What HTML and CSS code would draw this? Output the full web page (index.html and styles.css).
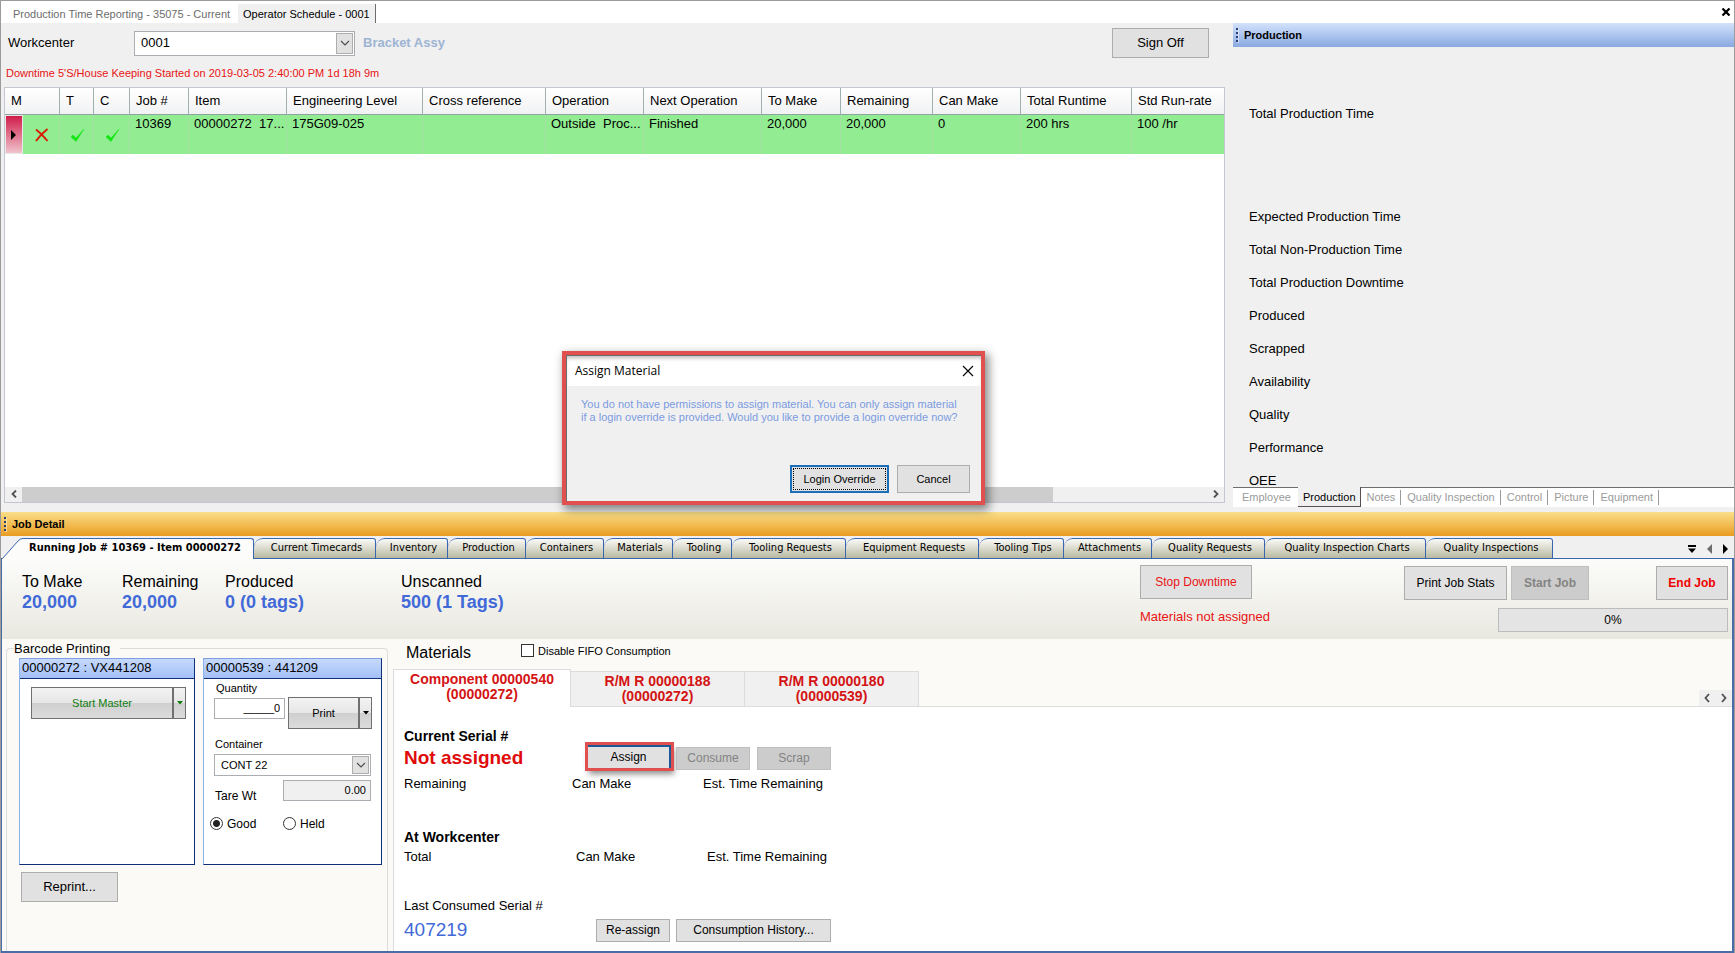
FILE: index.html
```html
<!DOCTYPE html>
<html lang="en">
<head>
<meta charset="utf-8">
<title>Operator Schedule - 0001</title>
<link rel="stylesheet" href="styles.css">
</head>
<body>
<div class="app">
  <nav class="doc-tabs" aria-label="Documents">
    <button class="doc-tab" type="button">Production Time Reporting - 35075 - Current</button>
    <button class="doc-tab doc-tab-active" type="button">Operator Schedule - 0001</button>
    <button class="doc-close" type="button" aria-label="Close"><svg width="10" height="8" viewBox="0 0 10 8"><path d="M1.500 .5l7 7M8.500 .5l-7 7" stroke="#000" stroke-width="2.200" fill="none"/></svg></button>
  </nav>

  <div class="upper">
    <main class="schedule">
      <div class="toolbar">
        <label class="toolbar-label" for="workcenter">Workcenter</label>
        <div class="combo combo-workcenter">
          <select id="workcenter"><option>0001</option></select>
          <span class="combo-arrow"><svg width="10" height="6" viewBox="0 0 10 6"><path d="M1 1l4 4 4-4" fill="none" stroke="#505050" stroke-width="1.200"/></svg></span>
        </div>
        <span class="workcenter-name">Bracket Assy</span>
        <button class="btn btn-signoff" type="button">Sign Off</button>
      </div>
      <p class="downtime">Downtime 5'S/House Keeping Started on 2019-03-05 2:40:00 PM 1d 18h 9m</p>
      <div class="grid-box">
        <table class="jobs">
          <colgroup>
            <col class="w18"><col class="w37"><col class="w34"><col class="w36"><col class="w59"><col class="w98"><col class="w136"><col class="w123"><col class="w98"><col class="w118"><col class="w79"><col class="w92"><col class="w88"><col class="w111"><col class="w92">
          </colgroup>
          <thead>
            <tr><th colspan="2">M</th><th>T</th><th>C</th><th>Job #</th><th>Item</th><th>Engineering Level</th><th>Cross reference</th><th>Operation</th><th>Next Operation</th><th>To Make</th><th>Remaining</th><th>Can Make</th><th>Total Runtime</th><th>Std Run-rate</th></tr>
          </thead>
          <tbody>
            <tr>
              <td class="row-head"><svg width="5" height="10" viewBox="0 0 5 10"><path d="M0 0l5 5-5 5z" fill="#000"/></svg></td>
              <td class="mark"><svg width="14" height="14" viewBox="0 0 14 14"><path d="M1 1.500Q7 6 12.500 13M12.500 1Q6 6 1 13" fill="none" stroke="#d81e05" stroke-width="2"/></svg></td>
              <td class="mark"><svg width="14" height="14" viewBox="0 0 14 14"><path d="M0 9l2-2 3 3 8-9-8 12.500z" fill="#14e614" stroke="#14e614" stroke-width=".5"/></svg></td>
              <td class="mark"><svg width="14" height="14" viewBox="0 0 14 14"><path d="M0 9l2-2 3 3 8-9-8 12.500z" fill="#14e614" stroke="#14e614" stroke-width=".5"/></svg></td>
              <td>10369</td><td>00000272&nbsp; 17...</td><td>175G09-025</td><td></td><td>Outside&nbsp; Proc...</td><td>Finished</td><td>20,000</td><td>20,000</td><td>0</td><td>200 hrs</td><td>100 /hr</td>
            </tr>
          </tbody>
        </table>
        <div class="scrollbar">
          <button class="scroll-btn" type="button" aria-label="Scroll left"><svg width="6" height="8" viewBox="0 0 6 8"><path d="M5 .5L1.500 4 5 7.500" fill="none" stroke="#505050" stroke-width="1.800"/></svg></button>
          <div class="scroll-track"><div class="scroll-thumb"></div></div>
          <button class="scroll-btn" type="button" aria-label="Scroll right"><svg width="6" height="8" viewBox="0 0 6 8"><path d="M1 .5L4.500 4 1 7.500" fill="none" stroke="#505050" stroke-width="1.800"/></svg></button>
        </div>
      </div>
    </main>

    <aside class="production">
      <h2 class="pane-title pane-title-blue"><span class="grip"></span>Production</h2>
      <ul class="metrics">
        <li class="metric-lead">Total Production Time</li>
        <li>Expected Production Time</li>
        <li>Total Non-Production Time</li>
        <li>Total Production Downtime</li>
        <li>Produced</li>
        <li>Scrapped</li>
        <li>Availability</li>
        <li>Quality</li>
        <li>Performance</li>
        <li>OEE</li>
      </ul>
      <nav class="side-tabs" aria-label="Production panes">
        <button class="side-tab side-tab-first" type="button">Employee</button>
        <button class="side-tab side-tab-active" type="button">Production</button>
        <button class="side-tab" type="button">Notes</button>
        <button class="side-tab" type="button">Quality Inspection</button>
        <button class="side-tab" type="button">Control</button>
        <button class="side-tab" type="button">Picture</button>
        <button class="side-tab" type="button">Equipment</button>
      </nav>
    </aside>
  </div>

  <section class="detail">
    <h2 class="pane-title pane-title-gold"><span class="grip"></span>Job Detail</h2>
    <nav class="job-tabs" aria-label="Job detail">
      <button class="job-tab-active" type="button"><svg width="24" height="21" viewBox="0 0 24 21"><path d="M0 20.500h1.500L17 3q2-2.500 5-2.500h2V21H0z" fill="#fcfcfb"/><path d="M0 20.500h1.500L17 3q2-2.500 5-2.500h2" fill="none" stroke="#3a66b0"/></svg><span>Running Job # 10369 - Item 00000272</span></button>
      <button class="job-tab" type="button">Current Timecards</button>
      <button class="job-tab" type="button">Inventory</button>
      <button class="job-tab" type="button">Production</button>
      <button class="job-tab" type="button">Containers</button>
      <button class="job-tab" type="button">Materials</button>
      <button class="job-tab" type="button">Tooling</button>
      <button class="job-tab" type="button">Tooling Requests</button>
      <button class="job-tab" type="button">Equipment Requests</button>
      <button class="job-tab" type="button">Tooling Tips</button>
      <button class="job-tab" type="button">Attachments</button>
      <button class="job-tab" type="button">Quality Requests</button>
      <button class="job-tab" type="button">Quality Inspection Charts</button>
      <button class="job-tab" type="button">Quality Inspections</button>
      <span class="job-nav">
        <button class="icon-btn" type="button" aria-label="Tab list"><svg width="8" height="8" viewBox="0 0 8 8"><path d="M0 0h8v2H0zM0 3.500h8L4 8z"/></svg></button>
        <button class="icon-btn" type="button" aria-label="Previous tab"><svg width="5" height="10" viewBox="0 0 5 10"><path d="M5 0v10L0 5z" fill="#6d6d6d"/></svg></button>
        <button class="icon-btn" type="button" aria-label="Next tab"><svg width="5" height="10" viewBox="0 0 5 10"><path d="M0 0v10l5-5z"/></svg></button>
      </span>
    </nav>

    <div class="job-panel">
      <div class="summary">
        <dl class="totals">
          <div><dt>To Make</dt><dd>20,000</dd></div>
          <div><dt>Remaining</dt><dd>20,000</dd></div>
          <div><dt>Produced</dt><dd>0 (0 tags)</dd></div>
          <div><dt>Unscanned</dt><dd>500 (1 Tags)</dd></div>
        </dl>
        <div class="downtime-actions">
          <button class="btn btn-stop" type="button">Stop Downtime</button>
          <span class="warning">Materials not assigned</span>
        </div>
        <div class="job-actions">
          <div class="job-buttons">
            <button class="btn btn-stats" type="button">Print Job Stats</button>
            <button class="btn btn-start" type="button" disabled>Start Job</button>
            <button class="btn btn-end" type="button">End Job</button>
          </div>
          <div class="progress" role="progressbar" aria-valuenow="0" aria-valuemin="0" aria-valuemax="100">0%</div>
        </div>
      </div>

      <div class="job-body">
        <fieldset class="barcode">
          <legend>Barcode Printing</legend>
          <div class="cards">
            <section class="card card-master">
              <h3>00000272 : VX441208</h3>
              <div class="split split-master">
                <button class="split-main" type="button">Start Master</button><button class="split-drop" type="button" aria-label="Start Master options"><svg width="6" height="4" viewBox="0 0 6 4"><path d="M0 0h6L3 3.500z" fill="#107c10"/></svg></button>
              </div>
            </section>
            <section class="card card-print">
              <h3>00000539 : 441209</h3>
              <div class="print-form">
                <div class="qty-row">
                  <div class="qty">
                    <label for="qty">Quantity</label>
                    <input id="qty" class="field" type="text" value="_____0">
                  </div>
                  <div class="split split-print">
                    <button class="split-main" type="button">Print</button><button class="split-drop" type="button" aria-label="Print options"><svg width="6" height="4" viewBox="0 0 6 4"><path d="M0 0h6L3 3.500z"/></svg></button>
                  </div>
                </div>
                <label class="container-label" for="container">Container</label>
                <div class="combo combo-container">
                  <select id="container"><option>CONT 22</option></select>
                  <span class="combo-arrow"><svg width="10" height="6" viewBox="0 0 10 6"><path d="M1 1l4 4 4-4" fill="none" stroke="#505050" stroke-width="1.200"/></svg></span>
                </div>
                <div class="tare">
                  <label for="tare">Tare Wt</label>
                  <input id="tare" class="field field-readonly" type="text" value="0.00" readonly>
                </div>
                <div class="radios">
                  <label><input type="radio" name="state" checked>Good</label>
                  <label><input type="radio" name="state">Held</label>
                </div>
              </div>
            </section>
          </div>
          <button class="btn btn-reprint" type="button">Reprint...</button>
        </fieldset>

        <section class="materials">
          <div class="materials-head">
            <h3>Materials</h3>
            <label><input class="check" type="checkbox">Disable FIFO Consumption</label>
          </div>
          <div class="mat-tabs">
            <button class="mat-tab mat-tab-active" type="button">Component 00000540<br>(00000272)</button>
            <button class="mat-tab" type="button">R/M R 00000188<br>(00000272)</button>
            <button class="mat-tab" type="button">R/M R 00000180<br>(00000539)</button>
            <span class="mat-nav">
              <button class="icon-btn" type="button" aria-label="Previous material"><svg width="6" height="10" viewBox="0 0 6 10"><path d="M5 1L1.500 5 5 9" fill="none" stroke="#505050" stroke-width="1.800"/></svg></button>
              <button class="icon-btn" type="button" aria-label="Next material"><svg width="6" height="10" viewBox="0 0 6 10"><path d="M1 1l3.500 4L1 9" fill="none" stroke="#505050" stroke-width="1.800"/></svg></button>
            </span>
          </div>
          <div class="mat-panel">
            <div class="serial">
              <div>
                <h4>Current Serial #</h4>
                <p class="unassigned">Not assigned</p>
              </div>
              <div class="serial-actions">
                <button class="btn btn-assign" type="button">Assign</button>
                <button class="btn btn-small" type="button" disabled>Consume</button>
                <button class="btn btn-small" type="button" disabled>Scrap</button>
              </div>
            </div>
            <div class="facts facts-serial"><span>Remaining</span><span>Can Make</span><span>Est. Time Remaining</span></div>
            <h4>At Workcenter</h4>
            <div class="facts facts-center"><span>Total</span><span>Can Make</span><span>Est. Time Remaining</span></div>
            <div class="last">
              <div>
                <p>Last Consumed Serial #</p>
                <p class="last-serial">407219</p>
              </div>
              <div class="last-actions">
                <button class="btn btn-small" type="button">Re-assign</button>
                <button class="btn btn-history" type="button">Consumption History...</button>
              </div>
            </div>
          </div>
        </section>
      </div>
    </div>
  </section>

  <section class="dialog" role="dialog" aria-labelledby="dialog-title">
    <header class="dialog-title">
      <h2 id="dialog-title">Assign Material</h2>
      <button class="icon-btn" type="button" aria-label="Close dialog"><svg width="12" height="12" viewBox="0 0 12 12"><path d="M1 1l10 10M11 1L1 11" stroke="#000" stroke-width="1.100" fill="none"/></svg></button>
    </header>
    <div class="dialog-body">
      <p>You do not have permissions to assign material. You can only assign material<br>if a login override is provided. Would you like to provide a login override now?</p>
      <div class="dialog-actions">
        <button class="btn btn-override" type="button"><span>Login Override</span></button>
        <button class="btn btn-cancel" type="button">Cancel</button>
      </div>
    </div>
  </section>
</div>
</body>
</html>
```
FILE: styles.css
```css
* { box-sizing: border-box; }

body {
  margin: 0;
  font: 13px/20px "Liberation Sans", Arial, sans-serif;
  color: #000;
  background: #f0f0f0;
}

h2, h3, h4, p, ul, dl, dd { margin: 0; padding: 0; font-size: 13px; font-weight: normal; }
ul { list-style: none; }
button, input, select { font: inherit; color: inherit; margin: 0; border-radius: 0; }
button { padding: 0; border: 0; background: none; white-space: nowrap; }
svg { display: block; }

.app {
  position: relative;
  display: grid;
  grid-template-rows: 22px minmax(488px, 488fr) minmax(441px, 441fr);
  min-height: 100vh;
  border: 1px solid #9b9b9b;
  border-bottom: 0;
}

.icon-btn { display: grid; place-items: center; }

/* Document tabs */
.doc-tabs { display: flex; align-items: flex-end; background: #fff; font-size: 11px; }
.doc-tab { height: 19px; padding: 0 8px 0 12px; color: #6d6d6d; }
.doc-tab-active { padding: 0 5px; color: #000; background: #f0f0f0; border-right: 1px solid #6d6d6d; }
.doc-close { margin: 0 3px 7px auto; }

/* Shared controls */
.btn {
  display: grid;
  place-items: center;
  background: #e1e1e1;
  border: 1px solid #adadad;
}
.btn:disabled { background: #ccc; border-color: #bfbfbf; color: #838383; }

.combo { display: grid; background: #fff; border: 1px solid #abadb3; }
.combo select {
  grid-area: 1 / 1;
  width: 100%;
  appearance: none;
  background: none;
  border: 0;
  padding: 0 24px 0 6px;
}
.combo-arrow {
  grid-area: 1 / 1;
  justify-self: end;
  display: grid;
  place-items: center;
  width: 17px;
  margin: 1px;
  background: #e1e1e1;
  border: 1px solid #adadad;
  pointer-events: none;
}

.grip {
  width: 2px;
  height: 14px;
  background: repeating-linear-gradient(#2b3f73 0 2px, transparent 2px 4px);
  box-shadow: 1px 1px 0 rgba(255, 255, 255, .5);
}
.pane-title {
  display: flex;
  align-items: center;
  gap: 6px;
  height: 24px;
  padding-left: 3px;
  font-size: 11px;
  font-weight: bold;
}
.pane-title-blue { background: linear-gradient(#d3e2fb, #88a9e1); }
.pane-title-gold { background: linear-gradient(#fadf89, #ea9c22); }

/* Upper area */
.upper {
  display: grid;
  grid-template-columns: minmax(0, 1224fr) minmax(0, 501fr);
  gap: 8px;
}
.schedule { display: flex; flex-direction: column; padding: 5px 0 9px 3px; }
.toolbar { display: flex; align-items: center; padding-right: 16px; }
.toolbar-label { width: 130px; padding-left: 4px; }
.combo-workcenter { width: 221px; height: 25px; }
.workcenter-name { margin-left: 8px; color: #9db4d3; font-weight: bold; }
.btn-signoff { width: 97px; height: 30px; margin-left: auto; }
.downtime { padding: 5px 2px 4px; color: #e81414; font-size: 11px; }
.grid-box {
  flex: 1;
  display: flex;
  flex-direction: column;
  background: #fff;
  border: 1px solid #c3c8d0;
}

.jobs { width: 100%; table-layout: fixed; border-collapse: separate; border-spacing: 0; }
.w18 { width: 18px; } .w34 { width: 34px; } .w36 { width: 36px; } .w37 { width: 37px; }
.w59 { width: 59px; } .w79 { width: 79px; } .w88 { width: 88px; } .w92 { width: 92px; }
.w98 { width: 98px; } .w111 { width: 111px; } .w118 { width: 118px; } .w123 { width: 123px; }
.w136 { width: 136px; }
.jobs th {
  height: 27px;
  padding: 0 5px 0 6px;
  text-align: left;
  font-weight: normal;
  white-space: nowrap;
  background: linear-gradient(#fff, #f1f2f3);
  border-right: 1px solid #9fb0b0;
  border-bottom: 1px solid #8fa3a0;
}
.jobs td {
  height: 39px;
  padding: 1px 0 0 5px;
  line-height: 16px;
  vertical-align: top;
  white-space: nowrap;
  background: #92ec92;
  border-right: 1px solid #a5dfa5;
}
.jobs th:last-child, .jobs td:last-child { border-right: 0; }
.jobs td.row-head {
  padding: 0 0 0 5px;
  vertical-align: middle;
  background: linear-gradient(#d01c4a, #f0c4cc);
  border: 1px solid #e8e8e8;
}
.jobs td.mark { padding: 0 0 0 2px; vertical-align: middle; }
.jobs td.mark svg { margin: 0 auto; }

.scrollbar { display: flex; height: 15px; margin-top: auto; background: #f0f0f0; }
.scroll-btn { display: grid; place-items: center; width: 17px; }
.scroll-track { flex: 1; }
.scroll-thumb { width: 87%; height: 100%; background: #cdcdcd; }

/* Production pane */
.production { display: flex; flex-direction: column; min-height: 0; padding-bottom: 5px; }
.metrics { flex: 1 1 0; min-height: 0; overflow: hidden; padding: 50px 16px 0; line-height: 33px; }
.metric-lead { margin-bottom: 70px; }
.side-tabs {
  display: flex;
  height: 20px;
  font-size: 11px;
  color: #9b9b9b;
  background: linear-gradient(#6d6d6d 0 1px, #fff 1px);
}
.side-tab { padding: 0 5px 0 6px; margin: 3px 0 2px; border-right: 1px solid #9b9b9b; line-height: 15px; }
.side-tab-first { padding: 0 7px 0 9px; border-right: 0; }
.side-tab-active {
  margin: 0;
  padding: 3px 4px 0 5px;
  color: #000;
  background: #f0f0f0;
  border-right: 1px solid #5a5050;
  border-bottom: 1px solid #5a5050;
}

/* Job detail */
.detail { display: flex; flex-direction: column; }
.job-tabs {
  display: grid;
  grid-template-columns: 253px 122px 72px 78px 78px 69px 59px 114px 133px 85px 88px 113px 161px 127px 1fr;
  align-items: end;
  height: 23px;
  font: 11px/18px "DejaVu Sans Condensed", "Noto Sans", sans-serif;
  background: linear-gradient(#f0f0f0 0 22px, #3a66b0 22px);
}
.job-tab {
  height: 21px;
  padding-left: 4px;
  background: linear-gradient(#fafaf7, #b9b9a2);
  border: 1px solid #3a66b0;
  border-left: 0;
  border-radius: 9px 3px 0 0;
}
.job-tab-active { display: flex; height: 21px; font-weight: bold; }
.job-tab-active span {
  flex: 1;
  height: 21px;
  padding-right: 8px;
  background: #fcfcfb;
  border-top: 1px solid #3a66b0;
  border-right: 1px solid #3a66b0;
  border-radius: 0 3px 0 0;
}
.job-nav { display: flex; justify-content: flex-end; gap: 11px; padding: 0 6px 5px 0; }

.job-panel {
  flex: 1;
  display: flex;
  flex-direction: column;
  border: 2px solid #4a6da8;
  border-width: 0 2px 2px 1px;
  background: #fbfaf7;
}
.summary {
  display: flex;
  align-items: flex-start;
  height: 80px;
  padding: 6px 4px 0 20px;
  background: linear-gradient(#fcfcfb, #e9e8df);
}
.totals { display: grid; grid-template-columns: 100px 103px 176px auto; padding-top: 7px; }
.totals dt { font-size: 16px; }
.totals dd { color: #4169d8; font-size: 18px; font-weight: bold; }
.downtime-actions { margin-left: auto; }
.btn-stop { width: 112px; height: 34px; color: #e81414; font-size: 12px; }
.warning { display: block; padding-top: 8px; color: #e81414; }
.job-actions { display: flex; flex-direction: column; width: 324px; margin-left: 134px; }
.job-buttons { display: flex; gap: 4px; padding-top: 1px; font-size: 12px; }
.btn-stats { width: 103px; height: 34px; }
.btn-start { width: 78px; font-weight: bold; }
.btn-end { width: 72px; margin-left: auto; color: #f00000; font-weight: bold; }
.progress {
  align-self: flex-end;
  width: 230px;
  height: 24px;
  margin-top: 8px;
  background: #e4e4e4;
  border: 1px solid #bcbcbc;
  font-size: 12px;
  line-height: 22px;
  text-align: center;
}

.job-body { flex: 1; display: flex; gap: 5px; padding-left: 4px; }

/* Barcode printing */
.barcode {
  width: 382px;
  min-width: 382px;
  margin: 0;
  padding: 0 5px 0 12px;
  border: 1px solid #dcdcdc;
  border-bottom: 0;
  border-radius: 4px 4px 0 0;
}
.barcode legend { margin-left: -5px; padding: 0 10px 0 0; line-height: 19px; }
.cards { display: flex; gap: 8px; }
.card {
  height: 207px;
  background: #fff;
  border: 1px solid #0f2f78;
  border-top-color: #7f9fe0;
  border-left-color: #8fb0ea;
}
.card h3 {
  height: 20px;
  padding-left: 2px;
  line-height: 18px;
  background: linear-gradient(#c6d9fc, #a3c0f6);
  border-bottom: 1px solid #0f2f78;
}
.card-master { width: 176px; }
.card-print { width: 179px; }
.split { display: flex; height: 32px; font-size: 11px; }
.split button {
  display: grid;
  place-items: center;
  background: linear-gradient(#f3f3f3, #e6e6e6 50%, #cfcfcf 51%, #dcdcdc);
  border: 1px solid #707070;
}
.split .split-main { flex: 1; }
.split .split-drop { width: 14px; border-left-width: 2px; margin-left: -1px; }
.split-master { width: 155px; margin: 8px 0 0 11px; color: #107c10; }
.split-print { width: 86px; }
.print-form { padding: 0 9px 0 10px; font-size: 11px; }
.qty-row { display: flex; align-items: flex-end; gap: 3px; }
.qty { width: 73px; padding-bottom: 10px; }
.qty label { display: block; padding-left: 2px; line-height: 19px; }
.field {
  display: block;
  width: 100%;
  height: 21px;
  padding: 0 4px;
  background: #fff;
  border: 1px solid #abadb3;
  font-size: 11px;
  text-align: right;
}
.container-label { display: block; padding: 5px 0 0 1px; }
.combo-container { height: 22px; width: 157px; }
.tare { display: flex; width: 157px; padding: 4px 0 0 1px; font-size: 12px; line-height: 32px; }
.tare label { width: 68px; }
.field-readonly { flex: 1; background: #f0f0f0; }
.radios { display: flex; padding-top: 2px; margin-left: -4px; font-size: 12px; line-height: 20px; }
.radios label { display: flex; align-items: center; gap: 4px; width: 73px; }
.radios input {
  appearance: none;
  width: 13px;
  height: 13px;
  border: 1px solid #333;
  border-radius: 50%;
  background: #fff;
}
.radios input:checked { background: radial-gradient(circle, #222 0 3px, #fff 4px); }
.btn-reprint { width: 97px; height: 30px; margin: 7px 0 0 2px; }

/* Materials */
.materials { flex: 1; display: flex; flex-direction: column; }
.materials-head { display: flex; align-items: flex-start; height: 30px; padding: 2px 0 0 13px; font-size: 11px; }
.materials-head h3 { width: 115px; font-size: 16px; line-height: 24px; }
.materials-head label { display: flex; align-items: center; gap: 4px; }
.check { appearance: none; width: 13px; height: 13px; background: #fff; border: 1px solid #333; }
.mat-tabs {
  display: flex;
  align-items: flex-end;
  height: 38px;
  background: linear-gradient(transparent 0 37px, #dcdcdc 37px);
}
.mat-tab {
  width: 174px;
  height: 36px;
  color: #d41414;
  background: #f0f0f0;
  border: 1px solid #dcdcdc;
  border-left: 0;
  font-size: 14px;
  font-weight: bold;
  line-height: 15px;
}
.mat-tab-active {
  width: 178px;
  height: 38px;
  padding-bottom: 2px;
  background: #fff;
  border: 1px solid #dcdcdc;
  border-bottom: 0;
}
.mat-nav { display: flex; justify-content: space-around; width: 33px; height: 16px; margin: 0 0 1px auto; background: #f0f0f0; }
.mat-panel { flex: 1; padding: 19px 0 8px 10px; background: #fff; border-left: 1px solid #dcdcdc; }
.mat-panel h4 { font-size: 14px; font-weight: bold; }
.serial, .last { display: flex; align-items: flex-end; }
.unassigned { color: #e00a0a; font-size: 19px; font-weight: bold; line-height: 24px; }
.serial > div:first-child { width: 184px; }
.serial-actions { display: flex; align-items: flex-end; gap: 7px; font-size: 12px; }
.btn-small { width: 74px; height: 23px; }
.btn-assign {
  width: 83px;
  height: 23px;
  margin: 0 -2px 2px 0;
  border: 0;
  border-top: 2px solid #1f5797;
  border-right: 2px solid #1f5797;
  outline: 3px solid #e0504e;
  box-shadow: 2px 5px 6px 1px rgba(0, 0, 0, .45);
}
.facts { display: grid; }
.facts-serial { grid-template-columns: 168px 131px auto; padding: 4px 0 33px; }
.facts-center { grid-template-columns: 172px 131px auto; padding-bottom: 29px; }
.last > div:first-child { width: 192px; }
.last-serial { padding-top: 2px; color: #4169d8; font-size: 19px; line-height: 24px; }
.last-actions { display: flex; gap: 6px; font-size: 12px; }
.btn-history { width: 155px; height: 23px; }

/* Dialog floats over the schedule */
.dialog {
  position: absolute;
  top: 350px;
  left: 561px;
  width: 423px;
  background: #f0f0f0;
  border: 4px solid #e0504e;
  box-shadow: 3px 4px 9px 1px rgba(0, 0, 0, .45);
}
.dialog-title {
  display: flex;
  align-items: center;
  justify-content: space-between;
  height: 31px;
  padding: 0 7px 0 8px;
  background: #fff;
  border-top: 1px solid #6d6d6d;
  border-left: 1px solid #6d6d6d;
  box-shadow: inset 0 4px 4px -2px #bbb;
}
.dialog-title h2 { font: 12px/20px "Open Sans", "Noto Sans", sans-serif; }
.dialog-body { padding: 12px 11px 8px 14px; border-left: 1px solid #6d6d6d; font-size: 11px; }
.dialog-body p { color: #7b9be0; font-size: 11px; line-height: 13px; white-space: nowrap; }
.dialog-actions { display: flex; justify-content: flex-end; gap: 8px; padding-top: 41px; }
.btn-override { width: 99px; height: 28px; border: 2px solid #1a6fb8; padding: 1px; }
.btn-override span { width: 100%; height: 100%; border: 1px dotted #000; line-height: 20px; }
.btn-cancel { width: 73px; height: 28px; }
```
